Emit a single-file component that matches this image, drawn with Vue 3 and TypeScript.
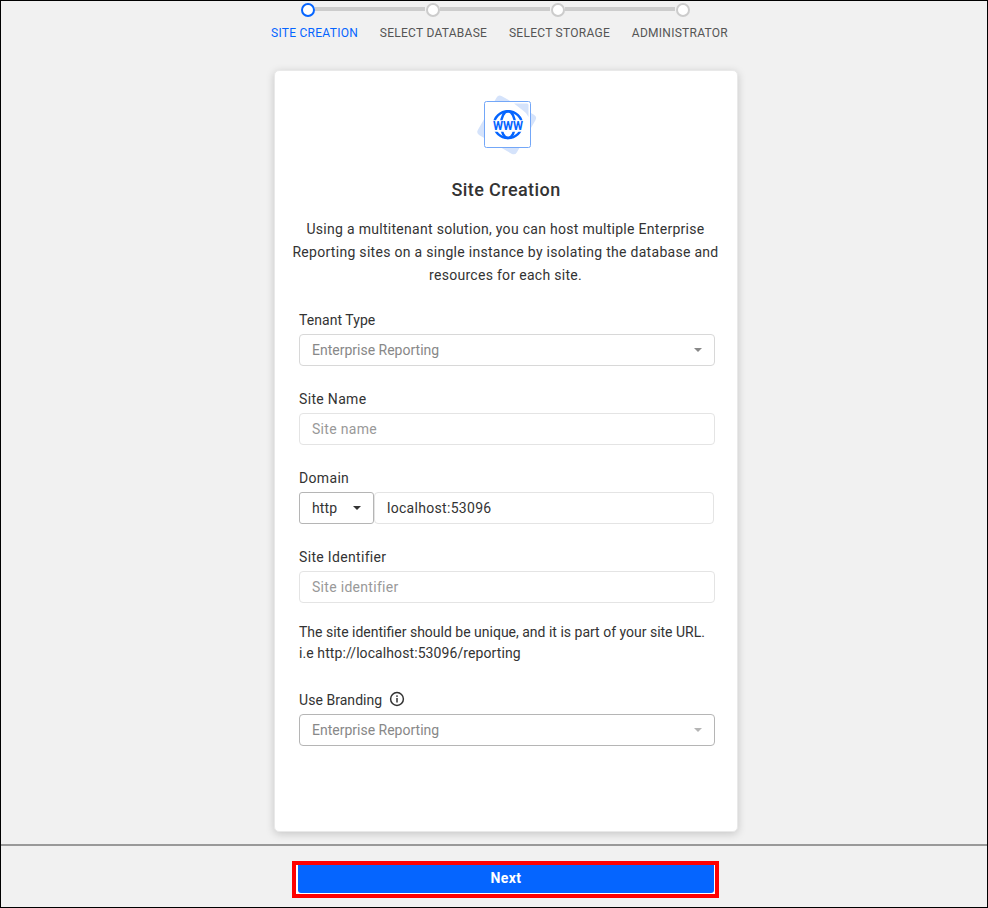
<script setup lang="ts">
interface Step {
  label: string
  active: boolean
}

const steps: Step[] = [
  { label: 'SITE CREATION', active: true },
  { label: 'SELECT DATABASE', active: false },
  { label: 'SELECT STORAGE', active: false },
  { label: 'ADMINISTRATOR', active: false },
]
</script>

<template>
  <div class="page">
    <main class="content">
      <div class="stepper">
        <div class="track">
          <div v-for="step in steps" :key="step.label" class="step" :class="{ active: step.active }">
            <i class="line before"></i><i class="dot"></i><i class="line after"></i>
          </div>
        </div>
        <div class="step-labels">
          <span v-for="step in steps" :key="step.label" :class="{ active: step.active }">{{ step.label }}</span>
        </div>
      </div>

      <section class="card">
        <svg class="logo" width="62" height="60" viewBox="0 0 62 60">
          <defs>
            <clipPath id="globe-halves">
              <rect x="14" y="10" width="36" height="15.3" />
              <rect x="14" y="36.7" width="36" height="12" />
            </clipPath>
          </defs>
          <rect x="8.2" y="7.4" width="45" height="45" rx="4" fill="#d5e3fb" transform="rotate(30 30.7 29.9)" />
          <rect x="8.5" y="6.5" width="46" height="46" rx="2" fill="#fff" stroke="#73a7f8" />
          <path d="M38 8.5 H51 Q52.5 8.5 52.5 10 V22 Q51 18 47 15.5 Z" fill="#d5e3fb" />
          <g fill="none" stroke="#0565ff" stroke-width="2.4" clip-path="url(#globe-halves)">
            <ellipse cx="32" cy="29.6" rx="14" ry="13.4" />
            <ellipse cx="32" cy="29.6" rx="7" ry="13.4" />
          </g>
          <text x="17" y="35" textLength="30" lengthAdjust="spacingAndGlyphs" class="logo-text">WWW</text>
        </svg>
        <h1>Site Creation</h1>
        <p class="intro">
          Using a multitenant solution, you can host multiple Enterprise<br />
          Reporting sites on a single instance by isolating the database and<br />
          resources for each site.
        </p>

        <div class="field">
          <label class="tight">Tenant Type</label>
          <div class="box select"><span>Enterprise Reporting</span><i class="caret"></i></div>
        </div>
        <div class="field">
          <label>Site Name</label>
          <input class="box" type="text" placeholder="Site name" />
        </div>
        <div class="field">
          <label>Domain</label>
          <div class="domain">
            <div class="box scheme"><span>http</span><i class="caret"></i></div>
            <input class="box host" type="text" value="localhost:53096" />
          </div>
        </div>
        <div class="field last">
          <label>Site Identifier</label>
          <input class="box" type="text" placeholder="Site identifier" />
        </div>
        <p class="hint">
          The site identifier should be unique, and it is part of your site URL.<br />
          <span class="example">i.e http://localhost:53096/reporting</span>
        </p>
        <div class="field">
          <label class="branding-label tight">
            <span>Use Branding</span>
            <svg width="16" height="16" viewBox="0 0 16 16">
              <circle cx="8" cy="8" r="6.4" fill="none" stroke="#333" stroke-width="1.5" />
              <path d="M8 7 V11.4" stroke="#333" stroke-width="1.5" />
              <circle cx="8" cy="5.1" r=".9" fill="#333" />
            </svg>
          </label>
          <div class="box select branding"><span>Enterprise Reporting</span><i class="caret"></i></div>
        </div>
      </section>
    </main>

    <footer class="footer">
      <div class="highlight"><button type="button">Next</button></div>
    </footer>
  </div>
</template>

<style>
body {
  margin: 0;
}
</style>

<style scoped>
* {
  box-sizing: border-box;
}
.page {
  width: 988px;
  height: 908px;
  border: 1px solid #000;
  background: #f1f1f1;
  font-family: Roboto, "Liberation Sans", sans-serif;
  font-size: 14px;
  color: #333;
  display: flex;
  flex-direction: column;
  overflow: hidden;
}
.content {
  height: 843px;
  display: flex;
  flex-direction: column;
  align-items: center;
  padding-left: 24px;
}
.stepper {
  margin-left: -22px;
  padding-top: 2px;
  display: flex;
  flex-direction: column;
  width: 500px;
  height: 69px;
  flex: none;
}
.track {
  display: flex;
}
.step {
  width: 125px;
  height: 14px;
  display: flex;
  align-items: center;
}
.line {
  flex: 1;
  height: 4px;
  background: #ccc;
  margin-bottom: 2px;
}
.line.before {
  margin-right: 1px;
}
.step:first-child .before,
.step:last-child .after {
  visibility: hidden;
}
.dot {
  width: 14px;
  height: 14px;
  border: 2px solid #ccc;
  border-radius: 50%;
  background: #fff;
}
.active .dot {
  border-color: #0565ff;
}
.step-labels {
  display: flex;
  justify-content: space-between;
  margin: 8px 17px 0 26px;
  font-size: 12px;
  line-height: 16px;
  letter-spacing: 0.27px;
  color: #555;
  white-space: nowrap;
}
.step-labels .active {
  color: #0565ff;
}
.card {
  width: 464px;
  height: 762px;
  flex: none;
  border: 1px solid #e9e9e9;
  border-radius: 5px;
  background: #fff;
  box-shadow: 0 2px 9px rgba(0, 0, 0, 0.18);
  padding: 24px 22px 0 24px;
  display: flex;
  flex-direction: column;
  align-items: center;
}
.logo {
  flex: none;
  display: block;
}
.logo-text {
  font: 700 12px Roboto, sans-serif;
  fill: #0565ff;
}
h1 {
  margin: 23px 2px 0 0;
  font-size: 18px;
  line-height: 24px;
  font-weight: 500;
  letter-spacing: 0.42px;
}
.intro {
  margin: 16px 3px 0 0;
  text-align: center;
  white-space: nowrap;
  line-height: 23px;
  letter-spacing: 0.29px;
}
.field {
  width: 416px;
  height: 79px;
  flex: none;
}
.intro + .field {
  margin-top: 24px;
}
.field.last {
  height: 55px;
}
label {
  display: block;
  height: 23px;
  line-height: 18px;
  letter-spacing: 0.33px;
}
.tight {
  letter-spacing: 0.05px;
}
.box {
  width: 416px;
  height: 32px;
  display: flex;
  align-items: center;
  justify-content: space-between;
  border: 1px solid #e4e4e4;
  border-radius: 4px;
  background: #fff;
  padding: 0 12px;
  font: 14px Roboto, sans-serif;
  letter-spacing: 0.3px;
  color: #333;
  outline: none;
}
.box::placeholder {
  color: #999;
  opacity: 1;
}
.box.select {
  border-color: #d8d8d8;
  color: #888;
  letter-spacing: 0;
}
.caret {
  border: 4px solid transparent;
  border-top-color: currentColor;
  border-bottom: 0;
}
.domain {
  display: flex;
}
.box.scheme {
  width: 75px;
  border-color: #b5b5b5;
  border-radius: 3px;
  letter-spacing: 0.1px;
}
.box.host {
  width: 340px;
}
.hint {
  width: 416px;
  margin: 19px 0 0;
  line-height: 21px;
  letter-spacing: 0;
  white-space: nowrap;
}
.example {
  letter-spacing: 0.09px;
}
.hint + .field {
  margin-top: 27px;
}
.branding-label {
  display: flex;
  gap: 7px;
}
.box.branding {
  border-color: #b5b5b5;
}
.branding .caret {
  color: #b5b5b5;
}
.footer {
  height: 63px;
  border-top: 2px solid #999;
  display: flex;
  justify-content: center;
  padding: 15px 0 0 23px;
}
.highlight {
  width: 427px;
  height: 37px;
  border: 4px solid #f00;
  background: #fff;
  padding: 0 1px 1px 2px;
}
button {
  display: block;
  width: 416px;
  height: 28px;
  border: 0;
  border-radius: 0 0 3px 3px;
  padding: 0 0 2px;
  background: #0565ff;
  color: #fff;
  font: 700 14px Roboto, sans-serif;
  letter-spacing: 0.4px;
}
</style>
